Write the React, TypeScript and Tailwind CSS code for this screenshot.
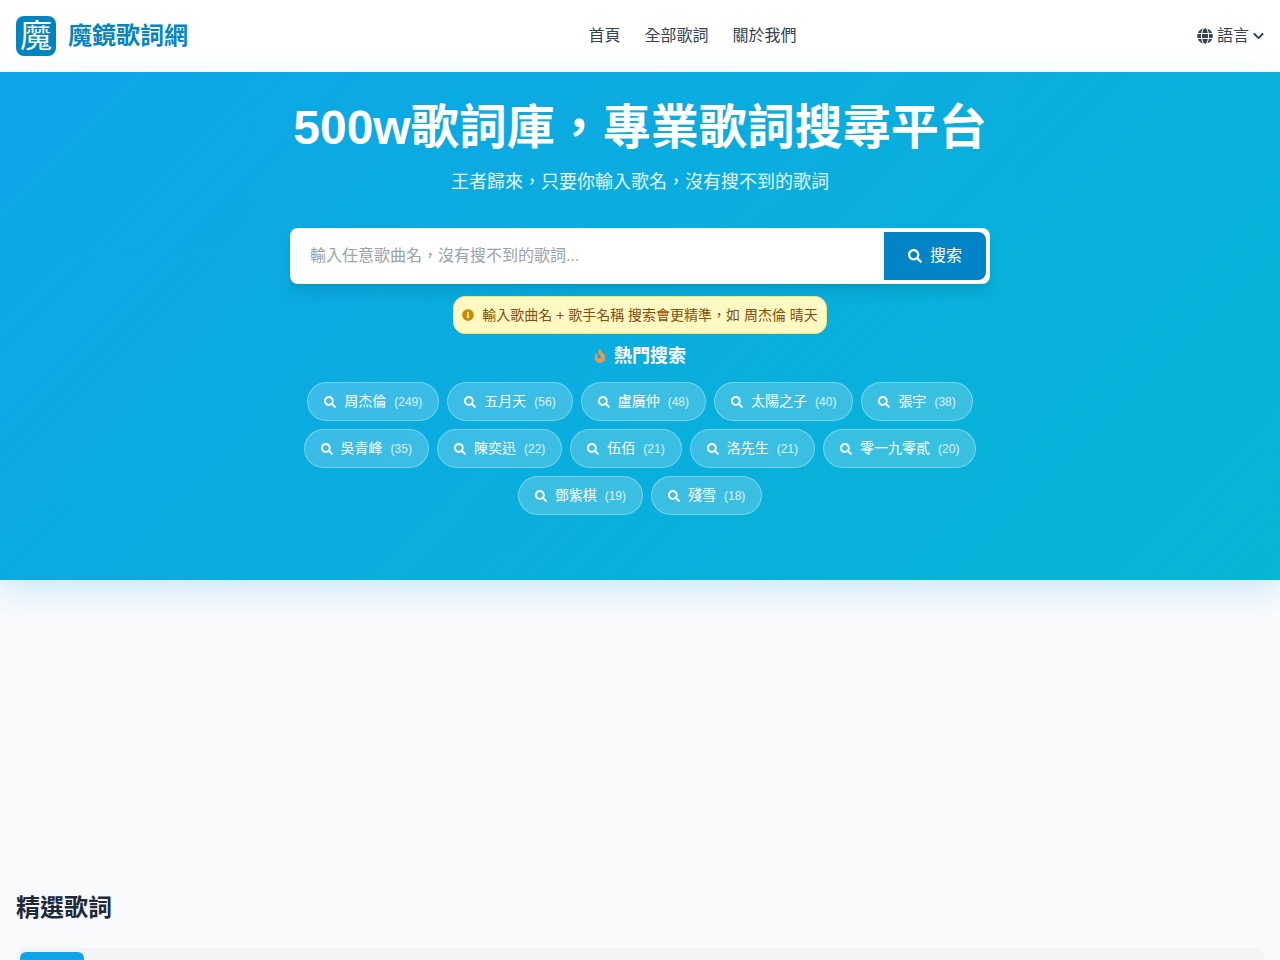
import React from 'react';
import { FaChevronDown, FaFire, FaGlobe, FaInfoCircle, FaSearch } from 'react-icons/fa';

const navLinks = ['首頁', '全部歌詞', '關於我們'];

const hotSearches = [
  { name: '周杰倫', count: 249 },
  { name: '五月天', count: 56 },
  { name: '盧廣仲', count: 48 },
  { name: '太陽之子', count: 40 },
  { name: '張宇', count: 38 },
  { name: '吳青峰', count: 35 },
  { name: '陳奕迅', count: 22 },
  { name: '伍佰', count: 21 },
  { name: '洛先生', count: 21 },
  { name: '零一九零貳', count: 20 },
  { name: '鄧紫棋', count: 19 },
  { name: '殘雪', count: 18 },
];

function Header() {
  return (
    <header className="flex items-center justify-between bg-white p-4">
      <a href="#" className="flex items-center gap-3">
        <span className="flex h-10 w-10 items-center justify-center rounded-lg bg-[#0284c0] text-[32px] leading-10 text-white">
          魔
        </span>
        <span className="text-2xl font-bold text-[#0284c7]">魔鏡歌詞網</span>
      </a>
      <nav className="flex gap-6">
        {navLinks.map((label) => (
          <a key={label} href="#" className="text-gray-700">
            {label}
          </a>
        ))}
      </nav>
      <button type="button" className="flex items-center gap-1 text-gray-700">
        <FaGlobe className="h-4 w-4" />
        <span>語言</span>
        <FaChevronDown className="h-3 w-[11px]" />
      </button>
    </header>
  );
}

function SearchBox() {
  return (
    <form
      className="flex w-full rounded-lg bg-white p-1 shadow-lg"
      onSubmit={(e) => e.preventDefault()}
    >
      <input
        type="text"
        aria-label="搜索"
        placeholder="輸入任意歌曲名，沒有搜不到的歌詞..."
        className="h-12 min-w-0 flex-1 px-4 text-base text-gray-800 outline-none placeholder:text-gray-400"
      />
      <button
        type="submit"
        className="flex items-center gap-2 rounded-r-lg bg-[#0284c7] px-6 text-white"
      >
        <FaSearch className="h-[14px] w-[14px]" />
        搜索
      </button>
    </form>
  );
}

function HotSearches() {
  return (
    <>
      <h2 className="mt-2 flex items-center gap-2 text-lg font-bold text-white">
        <FaFire className="h-[14px] w-3 text-[#ee9550]" />
        熱門搜索
      </h2>
      <div className="mt-3 flex flex-wrap justify-center gap-2">
        {hotSearches.map((item) => (
          <a
            key={item.name}
            href="#"
            className="flex items-center gap-2 rounded-full border border-white/30 bg-white/20 px-4 py-2 text-sm leading-[21px] text-white"
          >
            <FaSearch className="h-3 w-3" />
            {item.name}
            <span className="text-xs text-white/80">({item.count})</span>
          </a>
        ))}
      </div>
    </>
  );
}

export default function App() {
  return (
    <div className="min-h-screen bg-[#f9fafc] font-['Liberation_Sans','Noto_Sans_CJK_TC',sans-serif]">
      <Header />

      <section className="bg-linear-135/srgb from-[#0ea5e9] to-[#06b6d4] px-4 pt-6 pb-[65px] shadow-[0_10px_30px_rgba(14,165,233,0.2)]">
        <div className="mx-auto flex max-w-[700px] flex-col items-center">
          <h1 className="text-5xl leading-[64px] font-bold whitespace-nowrap text-white">
            500w歌詞庫，專業歌詞搜尋平台
          </h1>
          <p className="mt-2 mb-8 text-lg text-white/90">
            王者歸來，只要你輸入歌名，沒有搜不到的歌詞
          </p>
          <SearchBox />
          <p className="mt-3 flex items-center gap-2 rounded-xl border border-[#f5e77e] bg-[#fef9c3] p-2 text-sm text-[#854d0e]">
            <FaInfoCircle className="h-3 w-3 text-[#ca8a04]" />
            輸入歌曲名 + 歌手名稱 搜索會更精準，如 周杰倫 晴天
          </p>
          <HotSearches />
        </div>
      </section>

      <main className="px-4 pt-[308px]">
        <h2 className="text-2xl leading-10 font-bold text-gray-800">精選歌詞</h2>
        <div className="mt-5 rounded-lg bg-[#f3f4f6] p-1">
          <div className="h-16 w-16 rounded-md bg-[#0ea5e9]" />
        </div>
      </main>
    </div>
  );
}
